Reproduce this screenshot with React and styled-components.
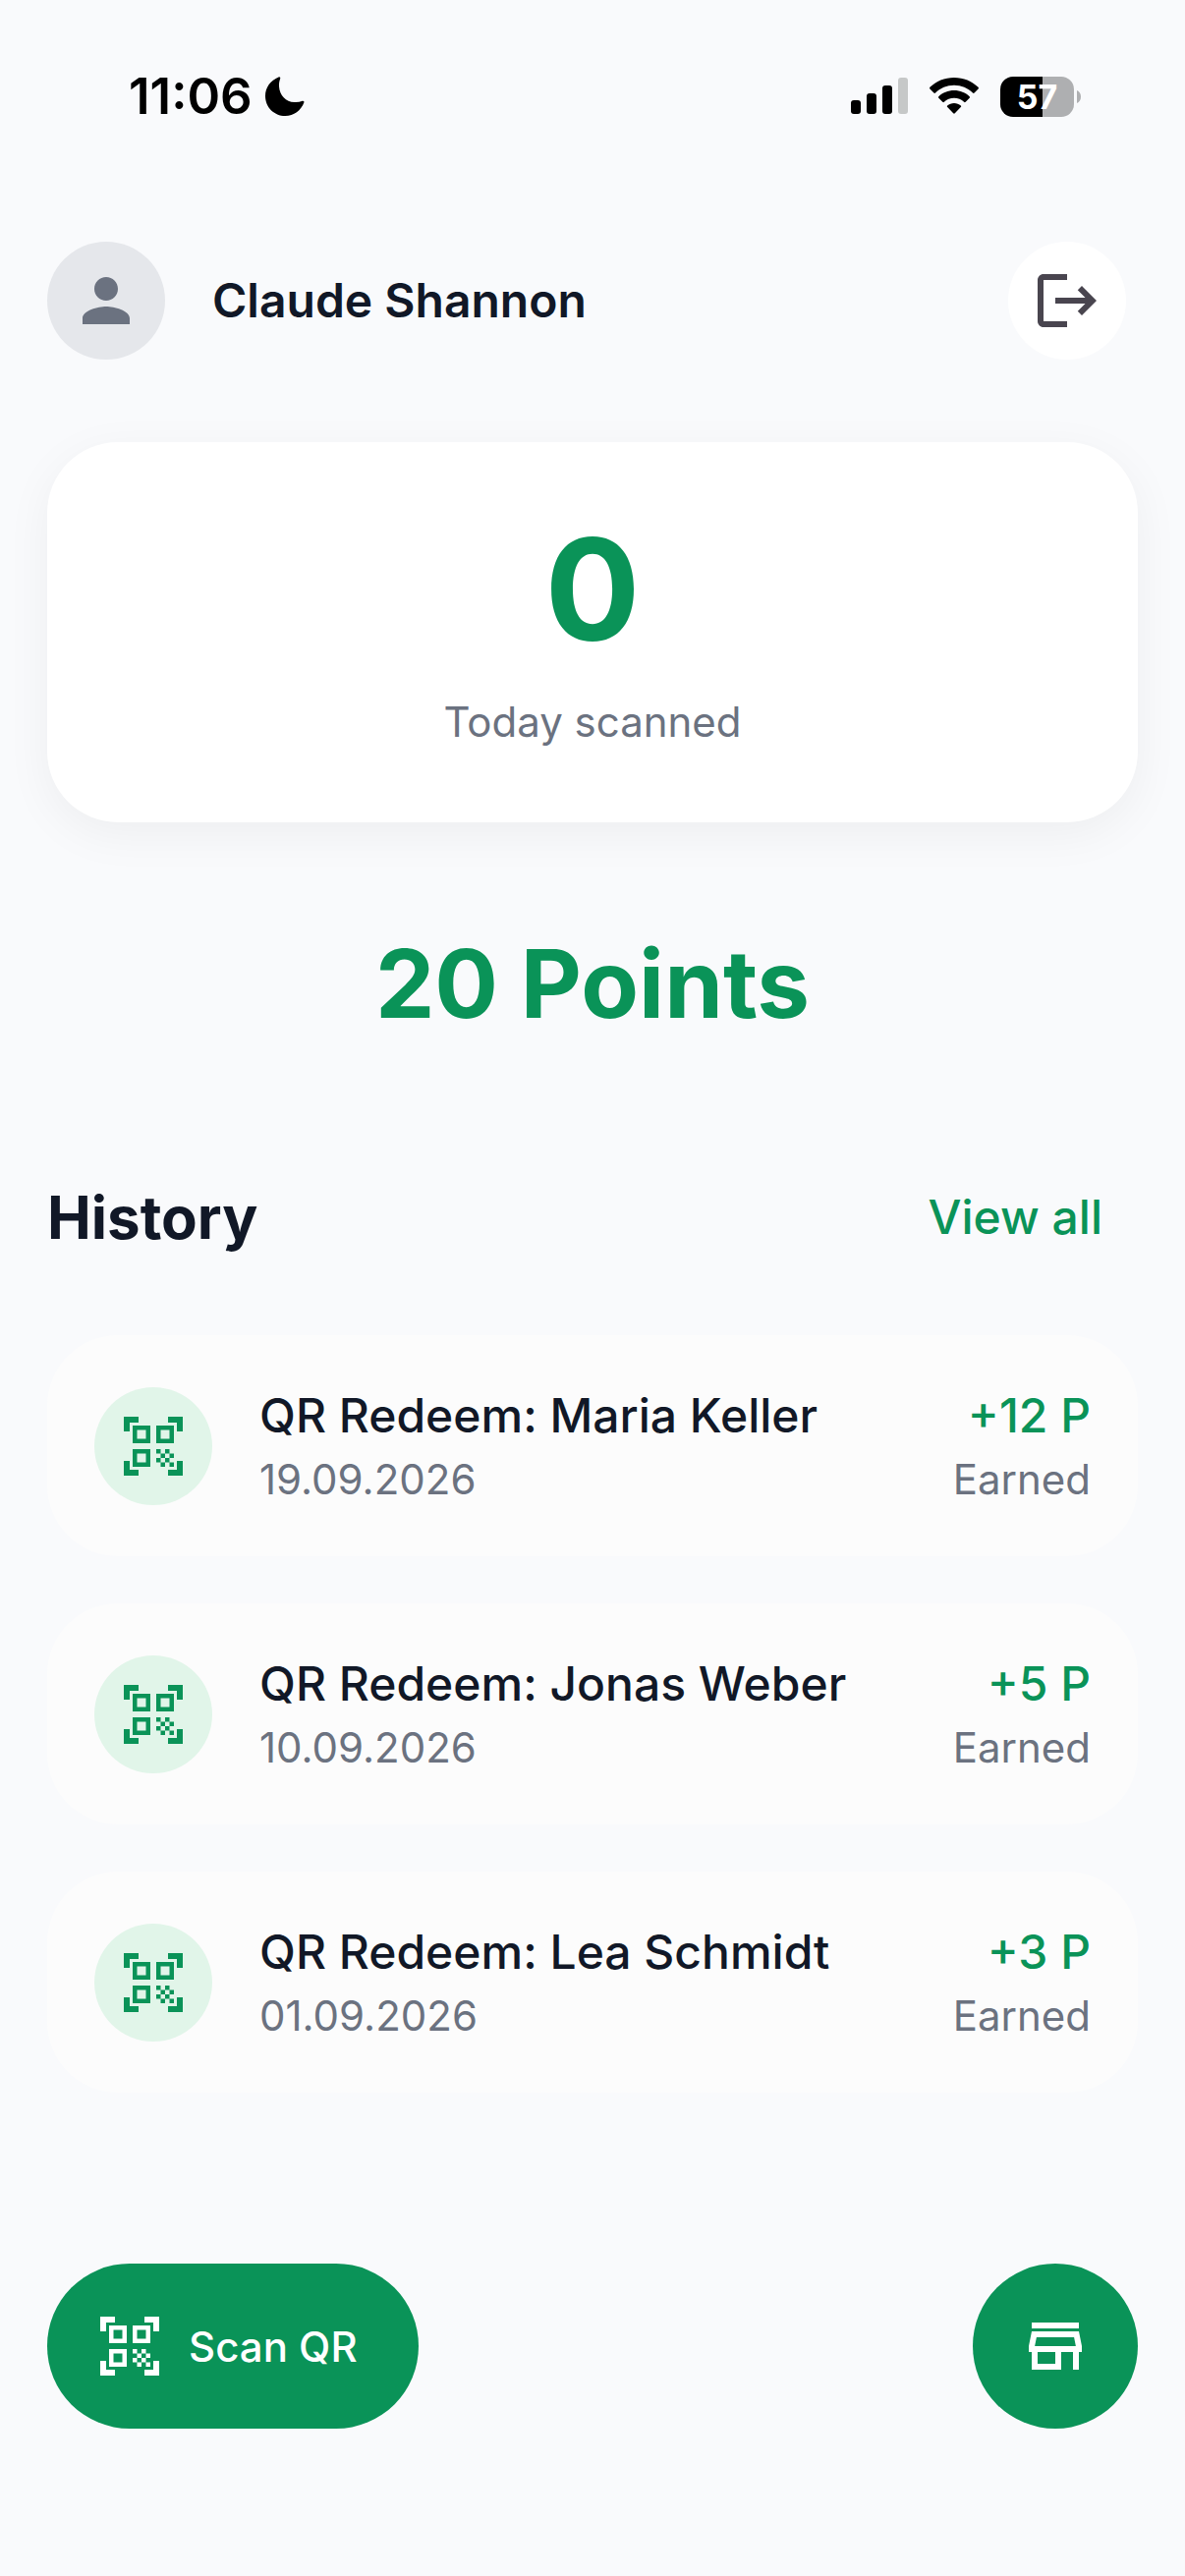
import React from "react";
import styled, { createGlobalStyle } from "styled-components";
import { MdPerson, MdLogout, MdQrCodeScanner, MdOutlineStore } from "react-icons/md";

const color = {
  page: "#f9fafc",
  card: "#ffffff",
  row: "#fcfcfc",
  ink: "#111827",
  muted: "#6b7280",
  green: "#0a9358",
  mint: "#e1f5e9",
  avatar: "#e5e7eb",
};

const GlobalStyle = createGlobalStyle`
  *, *::before, *::after { box-sizing: border-box; }
  body {
    margin: 0;
    background: ${color.page};
    color: ${color.ink};
    font-family: Inter, "Liberation Sans", sans-serif;
    -webkit-font-smoothing: antialiased;
  }
  h1, h2, p, ul { margin: 0; padding: 0; }
  button { border: 0; padding: 0; font: inherit; cursor: pointer; }
  svg { display: block; flex: none; }
`;

const Screen = styled.div`
  min-height: 100vh;
  display: flex;
  flex-direction: column;
`;

const StatusBar = styled.div`
  display: flex;
  justify-content: space-between;
  align-items: center;
  height: 196px;
  padding: 0 106px 0 131px;
  color: #000;
`;

const Clock = styled.div`
  display: flex;
  align-items: center;
  gap: 12px;
  font-size: 51px;
  font-weight: 600;
  line-height: 60px;
`;

const Indicators = styled.div`
  display: flex;
  align-items: center;
  gap: 22px;
`;

const Battery = styled.div`
  display: flex;
  align-items: center;
  gap: 3px;
`;

const BatteryBody = styled.div`
  width: 75px;
  height: 41px;
  border-radius: 13px;
  background: linear-gradient(to right, #000 57%, #aeafb1 57%);
  color: #fff;
  font-size: 34px;
  font-weight: 700;
  line-height: 41px;
  text-align: center;
`;

const Header = styled.header`
  display: flex;
  align-items: center;
  gap: 48px;
  height: 220px;
  padding: 0 60px 0 48px;
`;

const Disc = styled.div`
  display: flex;
  align-items: center;
  justify-content: center;
  flex: none;
  width: 120px;
  height: 120px;
  border-radius: 50%;
  background: ${(p) => p.$bg};
  color: ${(p) => p.$fg};
`;

const UserName = styled.h1`
  flex: 1;
  font-size: 48px;
  font-weight: 600;
  line-height: 72px;
`;

const Main = styled.main`
  display: flex;
  flex-direction: column;
  padding: 34px 48px 0;
`;

const ScanCard = styled.section`
  display: flex;
  flex-direction: column;
  align-items: center;
  gap: 24px;
  padding: 72px 48px 69px;
  border-radius: 72px;
  background: ${color.card};
  box-shadow: 0 12px 48px rgba(0, 0, 0, 0.05);
`;

const ScanCount = styled.p`
  color: ${color.green};
  font-size: 144px;
  font-weight: 700;
  line-height: 156px;
`;

const Caption = styled.p`
  color: ${color.muted};
  font-size: 42px;
  line-height: 66px;
`;

const Points = styled.p`
  margin-top: 106px;
  color: ${color.green};
  font-size: 96px;
  font-weight: 700;
  line-height: 116px;
  text-align: center;
`;

const SectionHead = styled.div`
  display: flex;
  align-items: center;
  justify-content: space-between;
  margin-top: 108px;
  padding-right: 36px;
  line-height: 144px;
`;

const SectionTitle = styled.h2`
  font-size: 60px;
  font-weight: 700;
`;

const ViewAll = styled.a`
  color: ${color.green};
  font-size: 48px;
  font-weight: 500;
  text-decoration: none;
`;

const History = styled.ul`
  display: flex;
  flex-direction: column;
  gap: 48px;
  margin-top: 48px;
  list-style: none;
`;

const Entry = styled.li`
  display: flex;
  align-items: center;
  gap: 48px;
  padding: 48px;
  border-radius: 72px;
  background: ${color.row};
`;

const EntryText = styled.div`
  flex: ${(p) => (p.$end ? "none" : 1)};
  min-width: 0;
  text-align: ${(p) => (p.$end ? "right" : "left")};
`;

const EntryTitle = styled.p`
  color: ${(p) => (p.$earned ? color.green : color.ink)};
  font-size: 48px;
  font-weight: 500;
  line-height: 68px;
`;

const EntryNote = styled.p`
  color: ${color.muted};
  font-size: 42px;
  line-height: 61px;
`;

const Actions = styled.nav`
  display: flex;
  justify-content: space-between;
  margin-top: auto;
  padding: 48px 48px 150px;
`;

const ActionButton = styled.button`
  display: flex;
  align-items: center;
  justify-content: center;
  gap: 24px;
  min-width: 168px;
  height: 168px;
  border-radius: 84px;
  background: ${color.green};
  color: #fff;
`;

const ScanButton = styled(ActionButton)`
  && { padding: 0 62px 0 48px; }
  font-size: 42px;
  font-weight: 500;
`;

const entries = [
  { name: "Maria Keller", date: "19.09.2026", points: 12 },
  { name: "Jonas Weber", date: "10.09.2026", points: 5 },
  { name: "Lea Schmidt", date: "01.09.2026", points: 3 },
];

const Moon = () => (
  <svg width="42" height="42" viewBox="0 0 42 42" aria-hidden="true">
    <path
      d="M14.6 1.4c1-.5 2 .4 1.6 1.5-1 2.600-1.400 5.100-1.200 8C15.500 20 22 26.500 30.500 27c3 .2 5.700-.2 8.300-1.200 1.100-.4 2 .5 1.600 1.500C37.400 35.500 30 41 21.300 41 10 41 1 32 1 20.700 1 12 6.300 4.600 14.600 1.400Z"
      fill="currentColor"
    />
  </svg>
);

const Signal = () => (
  <svg width="58" height="38" viewBox="0 0 58 38" aria-hidden="true">
    <rect x="0" y="23" width="10" height="14" rx="3" />
    <rect x="16" y="16" width="10" height="21" rx="3" />
    <rect x="32" y="8" width="10" height="29" rx="3" />
    <rect x="48" y="0" width="10" height="37" rx="3" fill="#c6c8c8" />
  </svg>
);

const Wifi = () => (
  <svg width="50" height="38" viewBox="0 0 50 38" aria-hidden="true">
    <path d="M25 0C15.400 0 6.700 3.700.4 9.800c-.5.5-.5 1.100 0 1.600l4 4.100c.5.500 1.100.5 1.600 0C10.900 10.700 17.600 7.800 25 7.800s14.100 2.900 19 7.700c.5.500 1.100.5 1.600 0l4-4.100c.5-.5.500-1.100 0-1.600C43.300 3.700 34.600 0 25 0Z" />
    <path d="M25 13c-6.100 0-11.600 2.300-15.700 6.200-.5.500-.5 1.100 0 1.600l4 4c.5.500 1.100.5 1.600 0 2.600-2.500 6.200-4 10.100-4s7.500 1.500 10.100 4c.5.500 1.100.5 1.600 0l4-4c.5-.5.500-1.100 0-1.600C36.600 15.300 31.100 13 25 13Z" />
    <path d="M25 26c-2.600 0-5 .9-6.800 2.400-.5.400-.5 1.100 0 1.600l6 6.300c.5.500 1.100.5 1.600 0l6-6.300c.5-.5.500-1.200 0-1.600C30 26.900 27.600 26 25 26Z" />
  </svg>
);

const BatteryTip = () => (
  <svg width="4" height="13" viewBox="0 0 4 13" aria-hidden="true">
    <path d="M0 0c2.500 1 4 3.500 4 6.500S2.500 12 0 13Z" fill="#aeafb1" />
  </svg>
);

export default function App() {
  return (
    <>
      <GlobalStyle />
      <Screen>
        <StatusBar>
          <Clock>
            <span>11:06</span>
            <Moon />
          </Clock>
          <Indicators>
            <Signal />
            <Wifi />
            <Battery>
              <BatteryBody>57</BatteryBody>
              <BatteryTip />
            </Battery>
          </Indicators>
        </StatusBar>

        <Header>
          <Disc $bg={color.avatar} $fg={color.muted}>
            <MdPerson size={72} />
          </Disc>
          <UserName>Claude Shannon</UserName>
          <Disc as="button" type="button" aria-label="Log out" $bg="#fff" $fg="#49454f">
            <MdLogout size={72} />
          </Disc>
        </Header>

        <Main>
          <ScanCard>
            <ScanCount>0</ScanCount>
            <Caption>Today scanned</Caption>
          </ScanCard>

          <Points>20 Points</Points>

          <SectionHead>
            <SectionTitle>History</SectionTitle>
            <ViewAll href="#history">View all</ViewAll>
          </SectionHead>

          <History id="history">
            {entries.map((e) => (
              <Entry key={e.date}>
                <Disc $bg={color.mint} $fg={color.green}>
                  <MdQrCodeScanner size={72} />
                </Disc>
                <EntryText>
                  <EntryTitle>QR Redeem: {e.name}</EntryTitle>
                  <EntryNote>{e.date}</EntryNote>
                </EntryText>
                <EntryText $end>
                  <EntryTitle $earned>+{e.points} P</EntryTitle>
                  <EntryNote>Earned</EntryNote>
                </EntryText>
              </Entry>
            ))}
          </History>
        </Main>

        <Actions>
          <ScanButton type="button">
            <MdQrCodeScanner size={72} />
            Scan QR
          </ScanButton>
          <ActionButton type="button" aria-label="Store">
            <MdOutlineStore size={72} />
          </ActionButton>
        </Actions>
      </Screen>
    </>
  );
}
